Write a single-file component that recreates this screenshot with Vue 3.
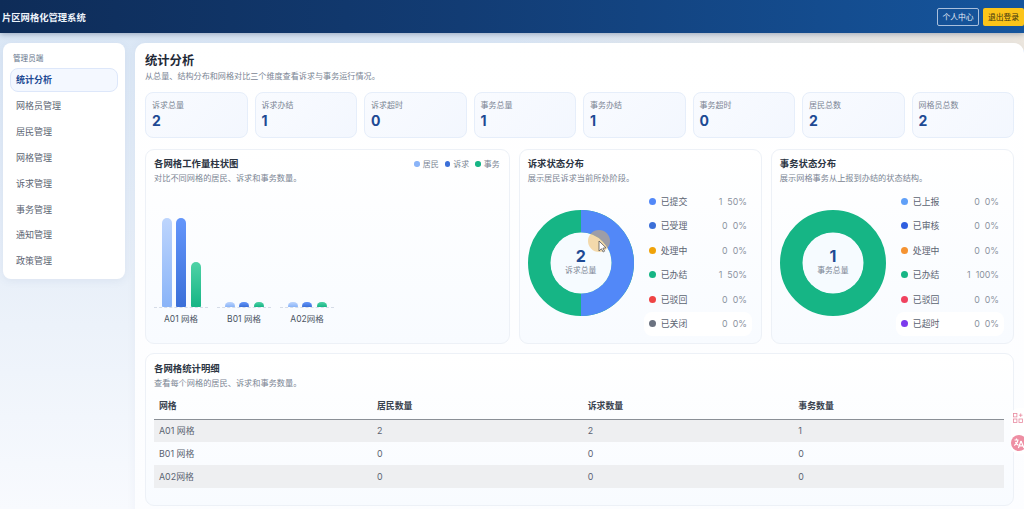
<script setup>
const menu = ["统计分析", "网格员管理", "居民管理", "网格管理", "诉求管理", "事务管理", "通知管理", "政策管理"];
const kpis = [
  ["诉求总量", 2], ["诉求办结", 1], ["诉求超时", 0], ["事务总量", 1],
  ["事务办结", 1], ["事务超时", 0], ["居民总数", 2], ["网格员总数", 2],
];
const legend = [
  { name: "居民", color: "#8ab4f8" },
  { name: "诉求", color: "#3b6fd8" },
  { name: "事务", color: "#16b585" },
];
const grids = [
  { name: "A01 网格", bars: [89, 89, 45] },
  { name: "B01 网格", bars: [5, 5, 5] },
  { name: "A02网格", bars: [5, 5, 5] },
];
const appeal = [
  ["已提交", "#5288f8", 1, "50%"], ["已受理", "#3b6fd8", 0, "0%"], ["处理中", "#f0a30a", 0, "0%"],
  ["已办结", "#16b585", 1, "50%"], ["已驳回", "#ef4444", 0, "0%"], ["已关闭", "#6b7280", 0, "0%"],
];
const affair = [
  ["已上报", "#60a0f8", 0, "0%"], ["已审核", "#2f5fe0", 0, "0%"], ["处理中", "#f59332", 0, "0%"],
  ["已办结", "#16b585", 1, "100%"], ["已驳回", "#f0425f", 0, "0%"], ["已超时", "#7c3aed", 0, "0%"],
];
const rows = [
  ["A01 网格", 2, 2, 1],
  ["B01 网格", 0, 0, 0],
  ["A02网格", 0, 0, 0],
];
</script>

<template>
  <div class="page">
    <header class="top">
      <div class="brand">片区网格化管理系统</div>
      <div class="actions">
        <button class="btn ghost">个人中心</button>
        <button class="btn logout">退出登录</button>
      </div>
    </header>

    <div class="layout">
      <aside class="side">
        <div class="side-title">管理员端</div>
        <div v-for="(m, i) in menu" :key="m" class="nav" :class="{ active: i === 0 }">{{ m }}</div>
      </aside>

      <main class="panel">
        <h1>统计分析</h1>
        <p class="lead">从总量、结构分布和网格对比三个维度查看诉求与事务运行情况。</p>

        <div class="kpis">
          <div v-for="k in kpis" :key="k[0]" class="kpi">
            <div class="k">{{ k[0] }}</div>
            <div class="v">{{ k[1] }}</div>
          </div>
        </div>

        <div class="charts">
          <section class="card">
            <div class="card-head">
              <div>
                <h2>各网格工作量柱状图</h2>
                <p>对比不同网格的居民、诉求和事务数量。</p>
              </div>
              <div class="legend">
                <span v-for="l in legend" :key="l.name"><i :style="{ background: l.color }"></i>{{ l.name }}</span>
              </div>
            </div>
            <div class="bars">
              <div v-for="g in grids" :key="g.name" class="group">
                <div class="plot">
                  <div class="bar b0" :style="{ height: g.bars[0] + 'px' }"></div>
                  <div class="bar b1" :style="{ height: g.bars[1] + 'px' }"></div>
                  <div class="bar b2" :style="{ height: g.bars[2] + 'px' }"></div>
                </div>
                <div class="group-name">{{ g.name }}</div>
              </div>
            </div>
          </section>

          <section class="card">
            <h2>诉求状态分布</h2>
            <p>展示居民诉求当前所处阶段。</p>
            <div class="donut-row">
              <div class="donut">
                <svg width="106" height="106" viewBox="0 0 106 106">
                  <circle cx="53" cy="53" r="41.5" fill="none" stroke="#16b585" stroke-width="23" />
                  <path d="M53 0 A53 53 0 0 1 53 106 L53 83.5 A30.5 30.5 0 0 0 53 22.5 Z" fill="#5288f8" />
                  <circle cx="53" cy="53" r="30.5" fill="#f6fbff" />
                </svg>
                <div class="donut-mid"><b>2</b><span>诉求总量</span></div>
                <svg class="pointer" width="24" height="24" viewBox="0 0 24 24">
                  <circle cx="12" cy="12" r="11" fill="#f0b450" fill-opacity="0.48" />
                  <path d="M12 12 L12 22 L14.4 19.8 L16.2 23 L17.6 22.2 L15.9 19.2 L19 18.8 Z" fill="#fff" stroke="#555" stroke-width="0.8" />
                </svg>
              </div>
              <ul class="status">
                <li v-for="s in appeal" :key="s[0]">
                  <i :style="{ background: s[1] }"></i><span class="name">{{ s[0] }}</span>
                  <span class="num">{{ s[2] }}</span><span class="pct">{{ s[3] }}</span>
                </li>
              </ul>
            </div>
          </section>

          <section class="card">
            <h2>事务状态分布</h2>
            <p>展示网格事务从上报到办结的状态结构。</p>
            <div class="donut-row">
              <div class="donut">
                <svg width="106" height="106" viewBox="0 0 106 106">
                  <circle cx="53" cy="53" r="41.5" fill="none" stroke="#16b585" stroke-width="23" />
                  <circle cx="53" cy="53" r="30.5" fill="#f6fbff" />
                </svg>
                <div class="donut-mid"><b>1</b><span>事务总量</span></div>
              </div>
              <ul class="status">
                <li v-for="s in affair" :key="s[0]">
                  <i :style="{ background: s[1] }"></i><span class="name">{{ s[0] }}</span>
                  <span class="num">{{ s[2] }}</span><span class="pct">{{ s[3] }}</span>
                </li>
              </ul>
            </div>
          </section>
        </div>

        <section class="card detail">
          <h2>各网格统计明细</h2>
          <p>查看每个网格的居民、诉求和事务数量。</p>
          <table>
            <thead>
              <tr><th>网格</th><th>居民数量</th><th>诉求数量</th><th>事务数量</th></tr>
            </thead>
            <tbody>
              <tr v-for="r in rows" :key="r[0]">
                <td v-for="(c, i) in r" :key="i">{{ c }}</td>
              </tr>
            </tbody>
          </table>
        </section>
      </main>
    </div>

    <div class="float-tool">
      <svg width="10" height="10" viewBox="0 0 10 10" fill="none" stroke="#e88aa0" stroke-width="0.8">
        <rect x="0.5" y="0.5" width="3.4" height="3.4" />
        <rect x="0.5" y="6" width="3.4" height="3.4" />
        <rect x="6" y="6" width="3.4" height="3.4" />
        <path d="M7.7 0.4v3.6M5.9 2.2h3.6" />
      </svg>
      <span class="float-dot">
        <svg width="12" height="12" viewBox="0 0 12 12" fill="none" stroke="#fff" stroke-width="1.2">
          <path d="M1.5 3h4M3.5 1.5v1.5M5 3C4.6 5.5 3 7.5 1.2 8.6M2.4 5c.7 1.4 1.8 2.6 3 3.2M8 4l-2.6 7M8 4l3 7M6.4 8.8h3.6" />
        </svg>
      </span>
    </div>
  </div>
</template>

<style>
html, body {
  margin: 0;
  height: 100%;
  overflow: hidden;
}
</style>

<style scoped>
.page {
  position: relative;
  width: 1024px;
  height: 509px;
  overflow: hidden;
  background:
    linear-gradient(90deg, rgba(239, 231, 220, 0) 50%, rgba(239, 231, 220, 0.9) 100%) top / 100% 50px no-repeat,
    linear-gradient(180deg, #d9e6f5 0%, #e9f0f9 55%, #f8fafe 100%);
  font-family: "Inter", "Noto Sans CJK SC", sans-serif;
  color: #334155;
}
.top {
  height: 33px;
  padding: 0 0 0 2px;
  display: flex;
  align-items: center;
  justify-content: space-between;
  background: linear-gradient(90deg, #0e2c58 0%, #123c74 45%, #15559d 100%);
  box-shadow: 0 1px 6px rgba(15, 40, 80, 0.35);
}
.brand {
  color: #eef4fb;
  font-size: 9.3px;
  font-weight: 700;
}
.actions {
  display: flex;
  gap: 4px;
}
.btn {
  height: 18px;
  padding: 0;
  font-family: inherit;
  font-size: 7.8px;
  border-radius: 2px;
  cursor: pointer;
}
.ghost {
  width: 42px;
  color: #e6eef8;
  background: transparent;
  border: 1px solid #a9bfdc;
}
.logout {
  width: 41px;
  color: #3d3410;
  background: #fcc419;
  border: 0;
}
.layout {
  display: flex;
  align-items: flex-start;
  gap: 10px;
  padding: 10px 0 0 3px;
}
.side {
  flex: none;
  width: 122px;
  height: 236px;
  box-sizing: border-box;
  padding: 10px 7px 0;
  background: #fff;
  border-radius: 8px;
  box-shadow: 0 2px 8px rgba(60, 90, 140, 0.08);
}
.side-title {
  padding-left: 3px;
  font-size: 7.6px;
  line-height: 11px;
  color: #64748b;
  margin-bottom: 4px;
}
.nav {
  height: 25.9px;
  line-height: 25.9px;
  box-sizing: border-box;
  padding-left: 6px;
  font-size: 9px;
  color: #5b6472;
}
.nav.active {
  height: 24px;
  line-height: 22px;
  margin-bottom: 1px;
  background: #f4f8ff;
  border: 1px solid #dde7fa;
  border-radius: 8px;
  padding-left: 5px;
  color: #1e4a94;
  font-weight: 700;
}
.panel {
  flex: 1;
  min-width: 0;
  height: 480px;
  box-sizing: border-box;
  padding: 9px 10px 0;
  background: linear-gradient(180deg, #fff, #fcfdff);
  border-radius: 10px 10px 0 0;
  box-shadow: 0 0 10px rgba(60, 90, 140, 0.06);
}
h1 {
  margin: 0;
  font-size: 12.3px;
  line-height: 18px;
  font-weight: 700;
  color: #1f2937;
}
.lead {
  margin: 0;
  font-size: 8.1px;
  line-height: 12px;
  color: #7b8594;
}
.kpis {
  display: grid;
  grid-template-columns: repeat(8, 1fr);
  gap: 7px;
  margin-top: 10px;
}
.kpi {
  height: 46px;
  box-sizing: border-box;
  padding: 7px 6px 0;
  background: linear-gradient(135deg, #f9fbff, #f3f7fe);
  border: 1px solid #e6eefa;
  border-radius: 8px;
}
.k {
  font-size: 8px;
  line-height: 11px;
  color: #7b8594;
}
.v {
  font-size: 14px;
  line-height: 19px;
  font-weight: 700;
  color: #1e4a94;
}
.charts {
  display: grid;
  grid-template-columns: 1.5fr 1fr 1fr;
  gap: 9px;
  margin-top: 11px;
}
.card {
  box-sizing: border-box;
  height: 195px;
  padding: 7px 9px 7px 8px;
  border: 1px solid #edf1f7;
  border-radius: 9px;
  background: linear-gradient(180deg, #fff, #f8fbff);
}
h2 {
  margin: 0;
  font-size: 9.4px;
  line-height: 14px;
  font-weight: 700;
  color: #2b3442;
}
.card p {
  margin: 2px 0 0;
  font-size: 8.2px;
  line-height: 11px;
  color: #7b8594;
}
.card-head {
  display: flex;
  justify-content: space-between;
  align-items: flex-start;
}
.legend {
  display: flex;
  gap: 6px;
  font-size: 8px;
  line-height: 14px;
  color: #7b8594;
}
.legend span {
  display: flex;
  align-items: center;
}
.legend i {
  width: 5.5px;
  height: 5.5px;
  border-radius: 50%;
  margin-right: 3px;
}
.bars {
  display: flex;
  gap: 9px;
  margin-top: 33px;
}
.group {
  width: 54px;
}
.plot {
  height: 90px;
  display: flex;
  align-items: flex-end;
  justify-content: center;
  gap: 4.5px;
  border-bottom: 1px dashed #d5dce7;
}
.bar {
  width: 10px;
  border-radius: 5px 5px 1px 1px;
}
.b0 { background: linear-gradient(180deg, #bdd5fd, #8ab4f8); }
.b1 { background: linear-gradient(180deg, #6496fb, #3b6fd8); }
.b2 { background: linear-gradient(180deg, #4fd2a6, #16b585); }
.group-name {
  margin-top: 6px;
  text-align: center;
  font-size: 8.5px;
  line-height: 11px;
  color: #4b5563;
}
.donut-row {
  display: flex;
  align-items: flex-start;
  gap: 10px;
  margin-top: 5px;
}
.donut {
  position: relative;
  width: 106px;
  height: 106px;
  margin-top: 21px;
  flex: none;
}
.donut svg {
  display: block;
}
.donut-mid {
  position: absolute;
  inset: 0;
  padding-bottom: 4px;
  box-sizing: border-box;
  display: flex;
  flex-direction: column;
  align-items: center;
  justify-content: center;
}
.donut-mid b {
  font-size: 16px;
  line-height: 18px;
  color: #1e4a94;
}
.donut-mid span {
  font-size: 7.8px;
  line-height: 11px;
  color: #7b8594;
}
.donut .pointer {
  position: absolute;
  left: 59px;
  top: 19px;
}
.status {
  list-style: none;
  flex: 1;
  margin: 0;
  padding: 0;
}
.status li {
  height: 24.5px;
  display: flex;
  align-items: center;
  padding: 0 5px 0 5px;
  font-size: 8.9px;
  border-radius: 8px;
  color: #5b6472;
}
.status li:last-child {
  background: #fff;
}
.status i {
  width: 7px;
  height: 7px;
  border-radius: 50%;
  margin-right: 5px;
}
.name {
  flex: 1;
}
.num, .pct {
  font-size: 8.8px;
  color: #8a93a0;
}
.pct {
  margin-left: 5px;
}
.detail {
  height: 153px;
  margin-top: 9px;
  padding-top: 8px;
}
table {
  width: 100%;
  margin-top: 4px;
  border-collapse: collapse;
  table-layout: fixed;
  font-size: 8.9px;
}
th:first-child, td:first-child {
  width: 218px;
}
th, td {
  box-sizing: border-box;
  text-align: left;
  padding: 0 5px;
}
th {
  height: 26px;
  font-weight: 700;
  color: #3b4450;
  border-bottom: 1px solid #8a8f96;
}
td {
  height: 23px;
  color: #5b6472;
}
tbody tr:nth-child(odd) {
  background: #eeeff1;
}
.float-tool {
  position: absolute;
  right: 0;
  top: 408px;
  width: 13px;
  height: 46px;
  padding-left: 2px;
  box-sizing: border-box;
  background: #fff;
  border-radius: 8px 0 0 8px;
  overflow: hidden;
}
.float-tool > svg {
  display: block;
  margin-top: 5px;
}
.float-dot {
  position: absolute;
  left: 0;
  top: 27px;
  width: 16px;
  height: 16px;
  display: flex;
  align-items: center;
  justify-content: center;
  border-radius: 50%;
  background: #ee8ea3;
}
</style>
